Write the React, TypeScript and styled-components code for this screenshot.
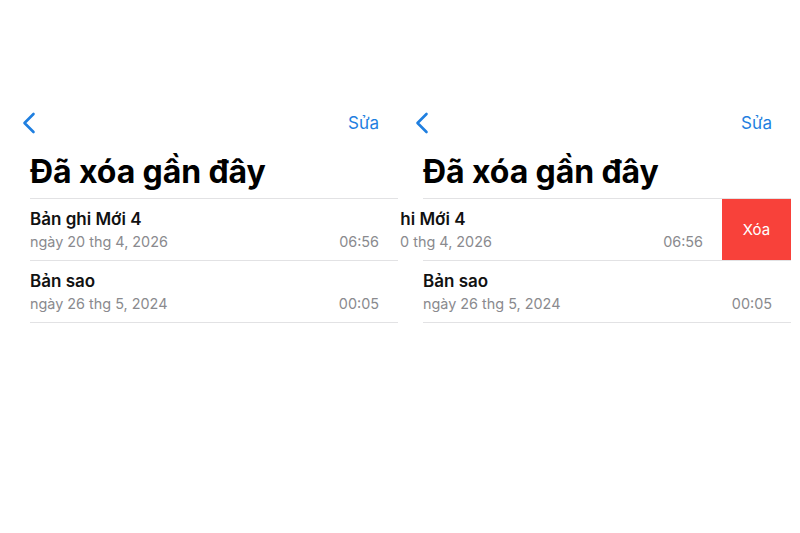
import React from "react";
import styled, { createGlobalStyle } from "styled-components";

const GlobalStyle = createGlobalStyle`
  html, body {
    margin: 0;
    padding: 0;
    background: #ffffff;
  }
  body {
    font-family: Inter, "Noto Sans", "Liberation Sans", sans-serif;
    -webkit-font-smoothing: antialiased;
  }
`;

const Page = styled.div`
  width: 800px;
  height: 533px;
  display: flex;
  background: #fff;
  overflow: hidden;
`;

const Panel = styled.div<{ $width: number; $inset: number; $gap: number }>`
  width: ${(p) => p.$width}px;
  margin-left: ${(p) => p.$gap}px;
  flex-shrink: 0;
  padding-top: 108px;
  padding-left: ${(p) => p.$inset}px;
  box-sizing: border-box;
  overflow: hidden;
`;

const NavBar = styled.div`
  height: 30px;
  display: flex;
  align-items: center;
  justify-content: space-between;
  padding-right: 19px;
`;

const BackButton = styled.button`
  border: none;
  background: none;
  padding: 0;
  margin-left: -8px;
  width: 16px;
  height: 22px;
  display: flex;
  align-items: center;
  cursor: pointer;
`;

const EditButton = styled.button`
  border: none;
  background: none;
  padding: 0;
  font-family: inherit;
  font-size: 17px;
  color: #1f7fe0;
  cursor: pointer;
`;

const Title = styled.h1`
  margin: 14px 0 0;
  height: 46px;
  font-size: 32px;
  font-weight: 700;
  color: #000;
  line-height: 40px;
  letter-spacing: -0.1px;
  white-space: nowrap;
`;

const List = styled.div`
  border-top: 1px solid #e2e2e4;
`;

const Row = styled.div`
  height: 61px;
  border-bottom: 1px solid #e2e2e4;
  display: flex;
`;

const RowContent = styled.div<{ $shift: number }>`
  min-width: 100%;
  margin-left: ${(p) => -p.$shift}px;
  box-sizing: border-box;
  padding: 9px 19px 0 0;
  display: flex;
  flex-direction: column;
`;

const RowTitle = styled.div`
  font-size: 17px;
  font-weight: 600;
  color: #111;
  line-height: 22px;
  white-space: nowrap;
`;

const RowMeta = styled.div`
  display: flex;
  justify-content: space-between;
  margin-top: 1px;
  font-size: 14.4px;
  color: #8a8a8e;
  line-height: 22px;
  white-space: nowrap;
`;

const DeleteAction = styled.button`
  width: 69px;
  flex-shrink: 0;
  height: 61px;
  border: none;
  background: #f8413a;
  color: #fff;
  font-family: inherit;
  font-size: 15px;
  padding: 0;
  cursor: pointer;
`;

const Chevron = () => (
  <svg width="14" height="22" viewBox="0 0 14 22" fill="none">
    <path
      d="M11.5 2 L2.5 11 L11.5 20"
      stroke="#1f7fe0"
      strokeWidth="2.6"
      strokeLinecap="round"
      strokeLinejoin="round"
    />
  </svg>
);

const recordings = [
  { name: "Bản ghi Mới 4", date: "ngày 20 thg 4, 2026", time: "06:56" },
  { name: "Bản sao", date: "ngày 26 thg 5, 2024", time: "00:05" },
];

const DeletedScreen = ({
  width,
  inset,
  gap,
  swiped,
}: {
  width: number;
  inset: number;
  gap: number;
  swiped?: number;
}) => (
  <Panel $width={width} $inset={inset} $gap={gap}>
    <NavBar>
      <BackButton aria-label="Quay lại">
        <Chevron />
      </BackButton>
      <EditButton>Sửa</EditButton>
    </NavBar>
    <Title>Đã xóa gần đây</Title>
    <List>
      {recordings.map((item, index) => {
        const isSwiped = swiped === index;
        return (
          <Row key={index}>
            <RowContent $shift={isSwiped ? 69 : 0}>
              <RowTitle>{item.name}</RowTitle>
              <RowMeta>
                <span>{item.date}</span>
                <span>{item.time}</span>
              </RowMeta>
            </RowContent>
            {isSwiped && <DeleteAction>Xóa</DeleteAction>}
          </Row>
        );
      })}
    </List>
  </Panel>
);

export default function App() {
  return (
    <>
      <GlobalStyle />
      <Page>
        <DeletedScreen width={398} inset={30} gap={0} />
        <DeletedScreen width={391} inset={23} gap={2} swiped={0} />
      </Page>
    </>
  );
}
